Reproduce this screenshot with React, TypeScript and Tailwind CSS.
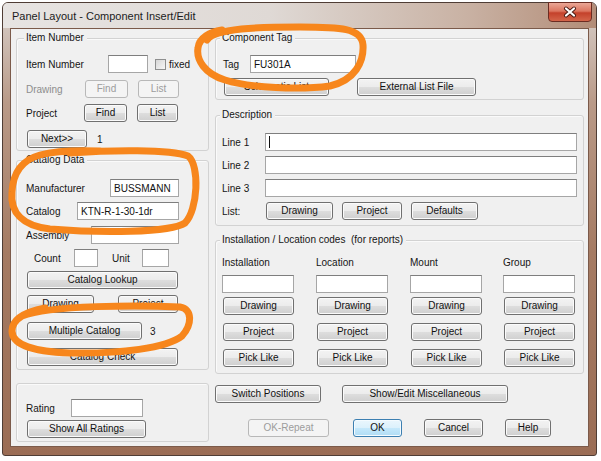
import React from "react";

// win7 style controls
const btnBase =
  "h-[18px] shrink-0 flex items-center justify-center rounded-[3px] border text-[10px] leading-none whitespace-nowrap";
const btnNormal =
  "border-[#707070] text-[#111] bg-[linear-gradient(#f3f3f3_0%,#ececec_48%,#dddddd_52%,#cfcfcf_100%)] shadow-[inset_0_0_0_1px_#fbfbfb]";
const btnDisabled = "border-[#b8b8b8] text-[#9c9c9c] bg-[#f4f4f4]";
const btnDefault =
  "border-[#3c7fb1] text-[#111] bg-[linear-gradient(#eaf6fd_0%,#dcf1fc_48%,#c4e8fb_52%,#b0dcf4_100%)] shadow-[inset_0_0_0_1px_#f4fbff]";

const Btn = ({
  className = "",
  disabled,
  primary,
  children,
}: {
  className?: string;
  disabled?: boolean;
  primary?: boolean;
  children: React.ReactNode;
}) => (
  <div
    className={`${btnBase} ${
      disabled ? btnDisabled : primary ? btnDefault : btnNormal
    } ${className}`}
  >
    {children}
  </div>
);

const Field = ({
  className = "",
  children,
}: {
  className?: string;
  children?: React.ReactNode;
}) => (
  <div
    className={`h-[18px] shrink-0 flex items-center bg-white border border-[#a6a6a6] border-t-[#7e7e7e] pl-[3px] text-[10px] text-[#111] whitespace-nowrap ${className}`}
  >
    {children}
  </div>
);

const Group = ({
  title,
  className = "",
  children,
}: {
  title?: string;
  className?: string;
  children: React.ReactNode;
}) => (
  <div
    className={`flex flex-col shrink-0 rounded-[3px] border border-[#d2d2d2] shadow-[inset_1px_1px_0_#fafafa] ${className}`}
  >
    {title && (
      <span className="-mt-[7px] -ml-[2px] self-start bg-[#f0f0f0] pl-[2px] pr-[3px] leading-[12px] whitespace-pre">
        {title}
      </span>
    )}
    {children}
  </div>
);

const codeColumns = [
  { name: "Installation", w: "w-[94px]" },
  { name: "Location", w: "w-[94px]" },
  { name: "Mount", w: "w-[93px]" },
  { name: "Group", w: "w-[74px]" },
];

export default function App() {
  return (
    <div className="relative w-[601px] h-[461px] overflow-hidden bg-white pl-[2px] pt-[2px] font-['Liberation_Sans',Arial,sans-serif] text-[10px] text-[#151515]">
      {/* Window */}
      <div className="flex flex-col w-[595px] h-[454px] rounded-t-[6px] rounded-b-[3px] border border-[#4f3d35] bg-[linear-gradient(180deg,#d8d0cb_0%,#b99a88_22%,#a57b63_55%,#9b6d55_100%)]">
        {/* Title bar */}
        <div className="h-[25px] shrink-0 flex items-start justify-between rounded-t-[5px] bg-[linear-gradient(90deg,#e7e4e2_0%,#dfd9d5_45%,#c9b2a4_78%,#b38d78_100%)]">
          <span className="mt-[6px] ml-[9px] text-[11px] leading-[14px] text-[#1c1c1c]">
            Panel Layout - Component Insert/Edit
          </span>
          <div className="-mt-px mr-[4px] w-[44px] h-[20px] flex items-center justify-center rounded-b-[4px] border border-[#6b2c22] bg-[linear-gradient(#eaa796_0%,#dc7660_45%,#c4412b_55%,#d4654a_100%)]">
            <svg width="14" height="12" viewBox="0 0 14 12">
              <path
                d="M3 2.5 L11 9.5 M11 2.5 L3 9.5"
                stroke="#4a1a12"
                strokeWidth="4"
                strokeLinecap="round"
              />
              <path
                d="M3 2.5 L11 9.5 M11 2.5 L3 9.5"
                stroke="#ffffff"
                strokeWidth="2.2"
                strokeLinecap="round"
              />
            </svg>
          </div>
        </div>

        {/* Client area */}
        <div className="mx-[7px] h-[419px] shrink-0 flex gap-[6px] border border-[#7b5a4a] bg-[#f0f0f0] pl-[5px] pt-[9px]">
          {/* Left column */}
          <div className="w-[193px] shrink-0 flex flex-col">
            <Group title="Item Number" className="h-[113px] pl-[9px]">
              <div className="mt-[11px] flex items-center">
                <span className="w-[82px]">Item Number</span>
                <Field className="w-[40px]" />
                <div className="ml-[7px] w-[11px] h-[11px] border border-[#8e8f8f] bg-[linear-gradient(135deg,#d6d6d6,#f7f7f7)]" />
                <span className="ml-[3px]">fixed</span>
              </div>
              <div className="mt-[7px] flex items-center">
                <span className="w-[59px] text-[#8d8d8d]">Drawing</span>
                <Btn className="w-[43px]" disabled>
                  Find
                </Btn>
                <Btn className="ml-[10px] w-[41px]" disabled>
                  List
                </Btn>
              </div>
              <div className="mt-[6px] flex items-center">
                <span className="w-[58px]">Project</span>
                <Btn className="w-[43px]">Find</Btn>
                <Btn className="ml-[10px] w-[41px]">List</Btn>
              </div>
              <div className="mt-[8px] flex items-center">
                <Btn className="ml-px w-[60px]">Next&gt;&gt;</Btn>
                <span className="ml-[10px]">1</span>
              </div>
            </Group>

            <Group title="Catalog Data" className="mt-[9px] h-[210px] pl-[9px]">
              <div className="mt-[13px] flex items-center">
                <span className="w-[84px]">Manufacturer</span>
                <Field className="w-[69px]">BUSSMANN</Field>
              </div>
              <div className="mt-[5px] flex items-center">
                <span className="w-[51px]">Catalog</span>
                <Field className="w-[102px]">KTN-R-1-30-1dr</Field>
              </div>
              <div className="mt-[6px] flex items-center">
                <span className="w-[65px]">Assembly</span>
                <Field className="w-[88px]" />
              </div>
              <div className="mt-[5px] flex items-center pl-[8px]">
                <span className="w-[40px]">Count</span>
                <Field className="w-[24px]" />
                <span className="ml-[14px] w-[30px]">Unit</span>
                <Field className="w-[27px]" />
              </div>
              <Btn className="mt-[4px] ml-px w-[151px]">Catalog Lookup</Btn>
              <div className="mt-[6px] flex items-center">
                <Btn className="ml-px w-[67px]">Drawing</Btn>
                <Btn className="ml-[24px] w-[60px]">Project</Btn>
              </div>
              <div className="mt-[9px] flex items-center">
                <Btn className="ml-px w-[115px]">Multiple Catalog</Btn>
                <span className="ml-[8px]">3</span>
              </div>
              <Btn className="mt-[8px] ml-px w-[151px]">Catalog Check</Btn>
            </Group>

            <Group className="mt-[13px] h-[59px] pl-[9px]">
              <div className="mt-[15px] flex items-center">
                <span className="w-[45px]">Rating</span>
                <Field className="w-[72px]" />
              </div>
              <Btn className="mt-[3px] ml-px w-[119px]">Show All Ratings</Btn>
            </Group>
          </div>

          {/* Right column */}
          <div className="w-[369px] shrink-0 flex flex-col">
            <Group title="Component Tag" className="h-[62px] pl-[6px]">
              <div className="mt-[11px] flex items-center">
                <span className="w-[28px] pl-px">Tag</span>
                <Field className="w-[106px]">FU301A</Field>
              </div>
              <div className="mt-[5px] flex items-center">
                <Btn className="ml-[2px] w-[105px]">Schematic List</Btn>
                <Btn className="ml-[28px] w-[119px]">External List File</Btn>
              </div>
            </Group>

            <Group title="Description" className="mt-[15px] h-[111px] pl-[6px]">
              {["Line 1", "Line 2", "Line 3"].map((line, i) => (
                <div
                  key={line}
                  className={`${i === 0 ? "mt-[12px]" : "mt-[5px]"} flex items-center`}
                >
                  <span className="w-[43px]">{line}</span>
                  <Field className="w-[312px]">
                    {i === 0 && <div className="h-[12px] w-px bg-[#111]" />}
                  </Field>
                </div>
              ))}
              <div className="mt-[5px] flex items-center">
                <span className="w-[44px]">List:</span>
                <Btn className="w-[67px]">Drawing</Btn>
                <Btn className="ml-[9px] w-[60px]">Project</Btn>
                <Btn className="ml-[9px] w-[67px]">Defaults</Btn>
              </div>
            </Group>

            <Group
              title="Installation / Location codes  (for reports)"
              className="mt-[14px] h-[134px] pl-[6px]"
            >
              <div className="mt-[11px] flex">
                {codeColumns.map((col) => (
                  <div key={col.name} className={`${col.w} shrink-0 flex flex-col`}>
                    <span className="leading-[12px]">{col.name}</span>
                    <Field className="mt-[6px] w-[72px]" />
                    <Btn className="mt-[4px] ml-px w-[71px]">Drawing</Btn>
                    <Btn className="mt-[8px] ml-px w-[71px]">Project</Btn>
                    <Btn className="mt-[8px] ml-px w-[71px]">Pick Like</Btn>
                  </div>
                ))}
              </div>
            </Group>

            <div className="mt-[11px] flex items-center">
              <Btn className="w-[106px]">Switch Positions</Btn>
              <Btn className="ml-[21px] w-[166px]">Show/Edit Miscellaneous</Btn>
            </div>

            <div className="mt-[16px] flex items-center">
              <Btn className="ml-[33px] w-[81px]" disabled>
                OK-Repeat
              </Btn>
              <Btn className="ml-[24px] w-[49px]" primary>
                OK
              </Btn>
              <Btn className="ml-[22px] w-[59px]">Cancel</Btn>
              <Btn className="ml-[22px] w-[46px]">Help</Btn>
            </div>
          </div>
        </div>
      </div>

      {/* hand drawn markup over the dialog */}
      <svg
        className="pointer-events-none absolute inset-0"
        width="601"
        height="461"
        viewBox="0 0 601 461"
        fill="none"
      >
        <g stroke="#f7861c" strokeWidth="7" strokeLinecap="round" strokeLinejoin="round">
          <path d="M207 40 C215 28 260 27 300 27 C340 27 362 28 363 45 C364 62 355 80 330 86 C300 90 250 88 225 80 C205 74 196 60 198 48 C199 38 210 32 222 30" />
          <path d="M70 153 C110 150 170 149 188 156 C200 165 198 210 185 223 C170 233 100 233 50 229 C22 226 10 212 12 192 C13 172 22 160 40 155 C55 151 75 150 100 151" />
          <path d="M22 316 C50 305 140 305 180 307 C193 309 192 325 182 336 C167 348 120 354 70 353 C35 352 12 345 12 331 C12 319 25 312 45 308" />
        </g>
      </svg>
    </div>
  );
}
